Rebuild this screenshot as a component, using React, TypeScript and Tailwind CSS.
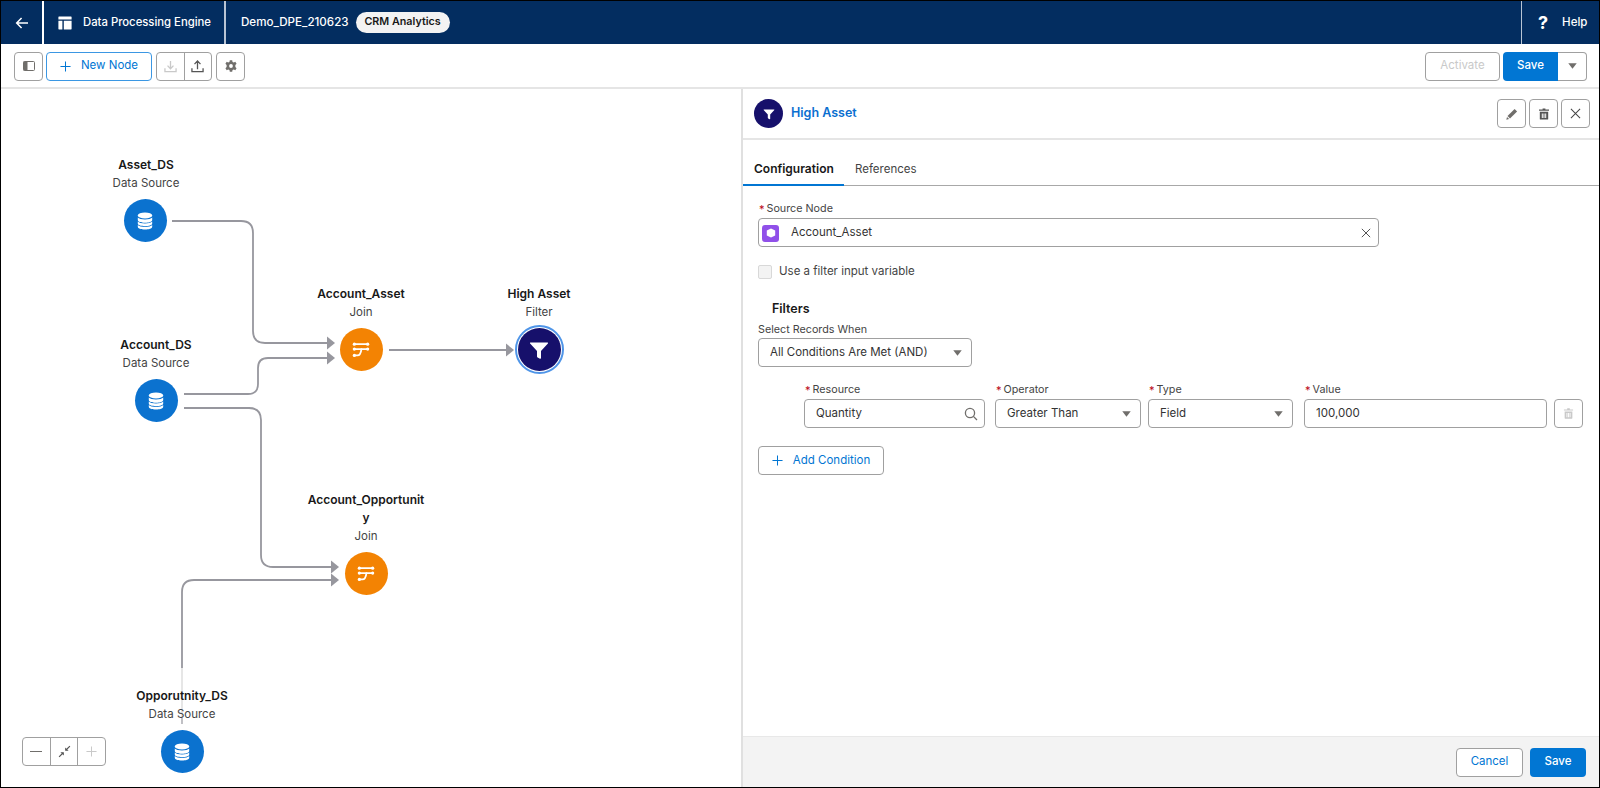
import type { ReactNode } from 'react'

const font = 'font-["Inter","Liberation_Sans",sans-serif]'

/* ── Icons ───────────────────────────────────────── */
function DbIcon() {
  return (
    <svg viewBox="0 0 18 18" className="w-[18px] h-[18px]" fill="#fff">
      <ellipse cx="9" cy="3.4" rx="7.2" ry="3" />
      <path d="M1.8 5.6 C3.5 8.2 14.5 8.2 16.2 5.6 V8 C16 9.8 13 10.8 9 10.8 S2 9.8 1.8 8Z" />
      <path d="M1.8 9.6 C3.5 12.2 14.5 12.2 16.2 9.6 V11.6 C16 13.4 13 14.2 9 14.2 S2 13.4 1.8 11.6Z" />
      <path d="M1.8 13 C3.5 15.6 14.5 15.6 16.2 13 V14.8 C16 16.6 13 17.6 9 17.6 S2 16.6 1.8 14.8Z" />
    </svg>
  )
}

function JoinIcon() {
  return (
    <svg viewBox="0 0 20 20" className="w-[18px] h-[18px]" fill="none" stroke="#fff" strokeWidth="2" strokeLinecap="round">
      <path d="M3 3.5 H17" />
      <path d="M3 9 H17" />
      <path d="M3 16 H6 C9 16 10 13 10.5 9" />
      <circle cx="2.6" cy="3.5" r="1.8" fill="#fff" stroke="none" />
      <circle cx="17.4" cy="3.5" r="1.8" fill="#fff" stroke="none" />
      <circle cx="2.6" cy="9" r="1.8" fill="#fff" stroke="none" />
      <circle cx="17.4" cy="9" r="1.8" fill="#fff" stroke="none" />
      <circle cx="2.6" cy="16" r="1.8" fill="#fff" stroke="none" />
    </svg>
  )
}

function FunnelIcon({ size }: { size: string }) {
  return (
    <svg viewBox="0 0 20 20" className={size} fill="#fff">
      <path d="M1.6 2.4 H18.4 C19 2.4 19.2 3 18.9 3.5 L12 11 V18 C12 18.6 11.6 19 11 18.7 L8.6 17.4 C8.2 17.2 8 16.9 8 16.4 V11 L1.1 3.5 C0.8 3 1 2.4 1.6 2.4Z" />
    </svg>
  )
}

function Caret({ color = '#706e6b' }: { color?: string }) {
  return (
    <svg viewBox="0 0 10 6" className="w-[9px] h-[6px]" fill={color}>
      <path d="M0.3 0 H9.7 L5 6Z" />
    </svg>
  )
}

function PlusIcon({ size, color }: { size: string; color: string }) {
  return (
    <svg viewBox="0 0 12 12" className={size} fill="none" stroke={color} strokeWidth="1.1">
      <path d="M6 0.5 V11.5 M0.5 6 H11.5" />
    </svg>
  )
}

function TrashIcon({ color, size = 'w-[12px] h-[12px]' }: { color: string; size?: string }) {
  return (
    <svg viewBox="0 0 12 12" className={size} fill={color}>
      <path d="M4.6 0.4 H7.4 V1.6 H11 V2.7 H1 V1.6 H4.6Z" />
      <path fillRule="evenodd" d="M1.8 3.8 H10.2 V11 C10.2 11.4 10 11.6 9.6 11.6 H2.4 C2 11.6 1.8 11.4 1.8 11Z M3.8 5.4 V10 H4.8 V5.4Z M5.5 5.4 V10 H6.5 V5.4Z M7.2 5.4 V10 H8.2 V5.4Z" />
    </svg>
  )
}

function CloseIcon({ size = 'w-[11px] h-[11px]' }: { size?: string }) {
  return (
    <svg viewBox="0 0 12 12" className={size} fill="none" stroke="#444" strokeWidth="1.1">
      <path d="M1 1 L11 11 M11 1 L1 11" />
    </svg>
  )
}

/* ── Small pieces ────────────────────────────────── */
function IconButton({ children, className = '' }: { children: ReactNode; className?: string }) {
  return (
    <div className={`h-[29px] w-[29px] flex items-center justify-center bg-white border border-[#a0a0a0] rounded-[4px] ${className}`}>
      {children}
    </div>
  )
}

function FieldLabel({ text, required = true, className = '' }: { text: string; required?: boolean; className?: string }) {
  return (
    <div className={`h-[20px] flex items-center text-[10.75px] text-[#444] ${className}`}>
      {required && <span className="text-[#ba0517] mr-[2px] text-[11px]">*</span>}
      {text}
    </div>
  )
}

function SelectBox({ value, className }: { value: string; className: string }) {
  return (
    <div className={`h-[29px] flex items-center justify-between pl-[11px] pr-[9px] border border-[#a0a0a0] rounded-[4px] bg-white text-[11.5px] text-[#333] ${className}`}>
      <span>{value}</span>
      <Caret />
    </div>
  )
}

function Node({ x, y, title, sub, children, color, wide }: {
  x: number
  y: number
  title: string
  sub: string
  children: ReactNode
  color: string
  wide?: boolean
}) {
  return (
    <div className="absolute flex flex-col items-center w-[122px]" style={{ left: x - 61, top: y }}>
      <div className={`text-[12px] leading-[18px] font-semibold text-[#181818] text-center ${wide ? 'w-[120px] break-all' : ''}`}>{title}</div>
      <div className="text-[11.5px] leading-[18px] text-[#444]">{sub}</div>
      <div className={`mt-[7px] w-[43px] h-[43px] rounded-full flex items-center justify-center ${color}`}>
        {children}
      </div>
    </div>
  )
}

/* ── Canvas edges ────────────────────────────────── */
function Edges() {
  const arrows = [
    'M328 335.5 L336 342 L328 348.5Z',
    'M328 350.5 L336 357 L328 363.5Z',
    'M332 559.5 L340 566 L332 572.5Z',
    'M332 572.5 L340 579 L332 585.5Z',
    'M507 342.5 L515 349 L507 355.5Z',
  ]
  return (
    <svg className="absolute left-0 top-0 w-[740px] h-[698px]" viewBox="2 88 740 698" fill="none">
      <g stroke="#97979e" strokeWidth="1.8">
        <path d="M173 220 H242 Q254 220 254 232 V330 Q254 342 266 342 H330" />
        <path d="M185 393 H249 Q259 393 259 383 V367 Q259 357 269 357 H330" />
        <path d="M185 407 H250 Q262 407 262 419 V554 Q262 566 274 566 H333" />
        <path d="M183 667 V591 Q183 579 195 579 H333" />
        <path d="M390 349 H508" />
      </g>
      <path d="M183 667 V717" stroke="#dcdcdc" strokeWidth="1.4" />
      <path d="M183 717 V723" stroke="#97979e" strokeWidth="1.2" />
      {arrows.map((d) => (
        <path key={d} d={d} fill="#97979e" />
      ))}
    </svg>
  )
}

export default function App() {
  return (
    <div className={`w-[1600px] h-[788px] border border-black flex flex-col overflow-hidden bg-white ${font}`}>
      {/* top bar */}
      <header className="h-[43px] shrink-0 bg-[#032d60] flex items-center text-white">
        <div className="w-[43px] h-full flex items-center justify-center border-r-2 border-white">
          <svg viewBox="0 0 16 14" className="w-[14px] h-[12px]" fill="none" stroke="#fff" strokeWidth="1.8">
            <path d="M15 7 H2 M7.5 1.2 L1.8 7 L7.5 12.8" />
          </svg>
        </div>
        <div className="w-[182px] h-full flex items-center border-r-2 border-[#b8c4d4] pl-[14px]">
          <svg viewBox="0 0 14 14" className="w-[14px] h-[14px] mr-[11px]" fill="#fff">
            <path d="M1 0.5 H13 C13.4 0.5 13.6 0.7 13.6 1 V3.4 H0.4 V1 C0.4 0.7 0.6 0.5 1 0.5Z" />
            <path d="M0.4 4.8 H4.4 V13.5 H1 C0.6 13.5 0.4 13.3 0.4 13Z" />
            <path d="M5.8 4.8 H13.6 V13 C13.6 13.3 13.4 13.5 13 13.5 H5.8Z" />
          </svg>
          <span className="text-[11.3px] font-medium whitespace-nowrap">Data Processing Engine</span>
        </div>
        <span className="ml-[15px] text-[11.6px] font-medium">Demo_DPE_210623</span>
        <span className="ml-[7px] h-[21px] w-[94px] flex items-center justify-center rounded-full bg-[#f3f3f3] text-[#181818] text-[10.75px] font-semibold">CRM Analytics</span>
        <div className="ml-auto w-[78px] h-full flex items-center border-l border-[#b8c4d4] pl-[16px]">
          <span className="text-[18px] font-bold leading-none">?</span>
          <span className="ml-[14px] text-[11.5px] font-medium">Help</span>
        </div>
      </header>

      {/* toolbar */}
      <div className="h-[45px] shrink-0 border-b-2 border-[#e5e5e5] flex items-center pl-[13px] pr-[12px] pt-[1px]">
        <IconButton>
          <svg viewBox="0 0 12 10" className="w-[12px] h-[10px]">
            <rect x="0.5" y="0.5" width="11" height="9" rx="1" fill="#fff" stroke="#706e6b" />
            <rect x="0.5" y="0.5" width="4" height="9" fill="#706e6b" />
          </svg>
        </IconButton>
        <div className="ml-[3px] h-[29px] w-[106px] flex items-center justify-center gap-[10px] border border-[#3b97e3] rounded-[4px] text-[11.5px] text-[#0176d3]">
          <PlusIcon size="w-[11px] h-[11px]" color="#0176d3" />
          New Node
        </div>
        <div className="ml-[4px] h-[29px] w-[56px] flex border border-[#a0a0a0] rounded-[4px]">
          <div className="flex-1 flex items-center justify-center border-r border-[#a0a0a0]">
            <svg viewBox="0 0 14 14" className="w-[13px] h-[13px]" fill="none" stroke="#c9c9c9" strokeWidth="1.4">
              <path d="M7 1 V9 M3.8 6 L7 9.4 L10.2 6 M1 9 V12.6 H13 V9" />
            </svg>
          </div>
          <div className="flex-1 flex items-center justify-center">
            <svg viewBox="0 0 14 14" className="w-[13px] h-[13px]" fill="none" stroke="#555" strokeWidth="1.4">
              <path d="M7 10 V1.4 M3.8 4.4 L7 1 L10.2 4.4 M1 9 V12.6 H13 V9" />
            </svg>
          </div>
        </div>
        <IconButton className="ml-[4px]">
          <svg viewBox="0 0 14 14" className="w-[12px] h-[12px]" fill="#706e6b">
            <path fillRule="evenodd" d="M5.6 0.4 H8.4 L8.8 2.2 L10.3 2.9 L12 2 L13.5 4.4 L12.1 5.7 V8.3 L13.5 9.6 L12 12 L10.3 11.1 L8.8 11.8 L8.4 13.6 H5.6 L5.2 11.8 L3.7 11.1 L2 12 L0.5 9.6 L1.9 8.3 V5.7 L0.5 4.4 L2 2 L3.7 2.9 L5.2 2.2Z M7 4.8 A2.2 2.2 0 1 0 7 9.2 A2.2 2.2 0 1 0 7 4.8Z" />
          </svg>
        </IconButton>
        <div className="ml-auto h-[29px] w-[75px] flex items-center justify-center border border-[#a0a0a0] rounded-[4px] text-[11.5px] text-[#c9c9c9]">Activate</div>
        <div className="ml-[3px] h-[29px] w-[84px] flex">
          <div className="w-[55px] flex items-center justify-center bg-[#0176d3] rounded-l-[4px] text-[11.5px] font-medium text-white">Save</div>
          <div className="flex-1 flex items-center justify-center border border-l-0 border-[#a0a0a0] rounded-r-[4px]">
            <Caret />
          </div>
        </div>
      </div>

      {/* body */}
      <div className="flex-1 flex min-h-0">
        {/* canvas */}
        <div className="relative w-[740px] shrink-0">
          <Edges />
          <Node x={145} y={67} title="Asset_DS" sub="Data Source" color="bg-[#0b72cf] -translate-x-px"><DbIcon /></Node>
          <Node x={155} y={247} title="Account_DS" sub="Data Source" color="bg-[#0b72cf]"><DbIcon /></Node>
          <Node x={360} y={196} title="Account_Asset" sub="Join" color="bg-[#f38303]"><JoinIcon /></Node>
          <Node x={365} y={402} title="Account_Opportunity" sub="Join" color="bg-[#f38303]" wide><JoinIcon /></Node>
          <Node x={181} y={598} title="Opporutnity_DS" sub="Data Source" color="bg-[#0b72cf]"><DbIcon /></Node>
          <Node x={538} y={196} title="High Asset" sub="Filter" color="bg-[#16106b] outline outline-[2px] outline-offset-[1px] outline-[#4f95e8]"><FunnelIcon size="w-[20px] h-[20px]" /></Node>

          {/* zoom controls */}
          <div className="absolute left-[21px] bottom-[21px] h-[29px] w-[84px] flex bg-white border border-[#a0a0a0] rounded-[4px]">
            <div className="flex-1 flex items-center justify-center border-r border-[#a0a0a0]">
              <div className="w-[12px] h-[1.5px] bg-[#706e6b]" />
            </div>
            <div className="flex-1 flex items-center justify-center border-r border-[#a0a0a0]">
              <svg viewBox="0 0 12 12" className="w-[13px] h-[13px]" fill="none" stroke="#555" strokeWidth="1.1">
                <path d="M1 11 L4.6 7.4 M11 1 L7.4 4.6" />
                <path d="M2.2 6.6 H5.4 V9.8Z M6.6 2.2 V5.4 H9.8Z" fill="#555" stroke="none" />
              </svg>
            </div>
            <div className="flex-1 flex items-center justify-center">
              <PlusIcon size="w-[11px] h-[11px]" color="#c9c9c9" />
            </div>
          </div>
        </div>

        {/* side panel */}
        <aside className="flex-1 min-w-0 border-l-2 border-[#e0e0e0] flex flex-col">
          <div className="h-[51px] shrink-0 border-b-2 border-[#e5e5e5] flex items-center pl-[11px] pr-[9px]">
            <div className="w-[29px] h-[29px] rounded-full bg-[#16106b] flex items-center justify-center">
              <FunnelIcon size="w-[12px] h-[12px]" />
            </div>
            <span className="ml-[8px] text-[12.5px] font-semibold text-[#0b6fd0]">High Asset</span>
            <div className="ml-auto flex gap-[3px]">
              <IconButton>
                <svg viewBox="0 0 12 12" className="w-[12px] h-[12px]" fill="#706e6b">
                  <path d="M8.6 0.9 L11.1 3.4 L4 10.5 L1.5 8Z" />
                  <path d="M1 8.9 L3.1 11 L0.3 11.7Z" />
                </svg>
              </IconButton>
              <IconButton><TrashIcon color="#555" /></IconButton>
              <IconButton><CloseIcon /></IconButton>
            </div>
          </div>

          {/* tabs */}
          <div className="h-[46px] shrink-0 flex border-b border-[#a8a8a8]">
            <div className="w-[101px] h-[46px] border-b-2 border-[#0176d3] flex items-center pl-[11px] pt-[14px] text-[12px] font-semibold text-[#181818]">Configuration</div>
            <div className="ml-[11px] flex items-center pt-[14px] text-[11.5px] text-[#444]">References</div>
          </div>

          {/* form */}
          <div className="flex-1 min-h-0 pl-[15px] pr-[8px] pt-[13px] text-[11.5px] text-[#333]">
            <FieldLabel text="Source Node" className="ml-[1px]" />
            <div className="-mt-px h-[29px] w-[621px] flex items-center pl-[3px] pr-[7px] pt-[1px] border border-[#a0a0a0] rounded-[4px]">
              <div className="w-[17px] h-[17px] rounded-[3px] bg-[#9050e9] flex items-center justify-center">
                <svg viewBox="0 0 10 10" className="w-[10px] h-[10px]" fill="#fff"><path d="M5 0.5 L9.2 2.4 V7.6 L5 9.5 L0.8 7.6 V2.4Z" /></svg>
              </div>
              <span className="ml-[12px]">Account_Asset</span>
              <div className="ml-auto"><CloseIcon size="w-[10px] h-[10px]" /></div>
            </div>

            <div className="mt-[18px] flex items-center h-[14px]">
              <div className="w-[14px] h-[14px] rounded-[2px] bg-[#f3f3f3] border border-[#d8d8d8]" />
              <span className="ml-[7px] text-[#444]">Use a filter input variable</span>
            </div>

            <div className="mt-[21px] ml-[14px] h-[18px] flex items-center text-[12.5px] font-semibold text-[#181818]">Filters</div>
            <FieldLabel text="Select Records When" required={false} className="mt-[2px]" />
            <SelectBox value="All Conditions Are Met (AND)" className="-mt-[2px] w-[214px] text-[#333]" />

            {/* condition row */}
            <div className="mt-[12px] ml-[46px] flex items-end gap-[10px]">
              <div className="w-[181px]">
                <FieldLabel text="Resource" className="ml-px translate-y-px" />
                <div className="h-[29px] mt-0 flex items-center justify-between pl-[11px] pr-[6px] border border-[#a0a0a0] rounded-[4px]">
                  <span>Quantity</span>
                  <svg viewBox="0 0 14 14" className="w-[14px] h-[14px]" fill="none" stroke="#706e6b" strokeWidth="1.3">
                    <circle cx="6" cy="6" r="4.6" />
                    <path d="M9.4 9.4 L13 13" />
                  </svg>
                </div>
              </div>
              <div className="w-[146px]">
                <FieldLabel text="Operator" className="ml-px translate-y-px" />
                <SelectBox value="Greater Than" className="w-full" />
              </div>
              <div className="w-[145px] -ml-[3px]">
                <FieldLabel text="Type" className="ml-px translate-y-px" />
                <SelectBox value="Field" className="w-full" />
              </div>
              <div className="w-[243px] ml-px">
                <FieldLabel text="Value" className="ml-px translate-y-px" />
                <div className="h-[29px] flex items-center pl-[11px] border border-[#a0a0a0] rounded-[4px]">100,000</div>
              </div>
              <IconButton className="-ml-[3px]"><TrashIcon color="#c9c9c9" size="w-[11px] h-[11px]" /></IconButton>
            </div>

            <div className="mt-[18px] h-[29px] w-[126px] flex items-center justify-center gap-[10px] border border-[#a0a0a0] rounded-[4px] text-[#0176d3]">
              <PlusIcon size="w-[11px] h-[11px]" color="#0176d3" />
              Add Condition
            </div>
          </div>

          {/* footer */}
          <div className="h-[51px] shrink-0 bg-[#f3f3f3] border-t border-[#e8e8e8] flex items-center justify-end gap-[7px] pr-[13px]">
            <div className="h-[29px] w-[67px] flex items-center justify-center bg-white border border-[#a0a0a0] rounded-[4px] text-[11.5px] text-[#0176d3]">Cancel</div>
            <div className="h-[29px] w-[56px] flex items-center justify-center bg-[#0176d3] rounded-[4px] text-[11.5px] font-medium text-white">Save</div>
          </div>
        </aside>
      </div>
    </div>
  )
}
